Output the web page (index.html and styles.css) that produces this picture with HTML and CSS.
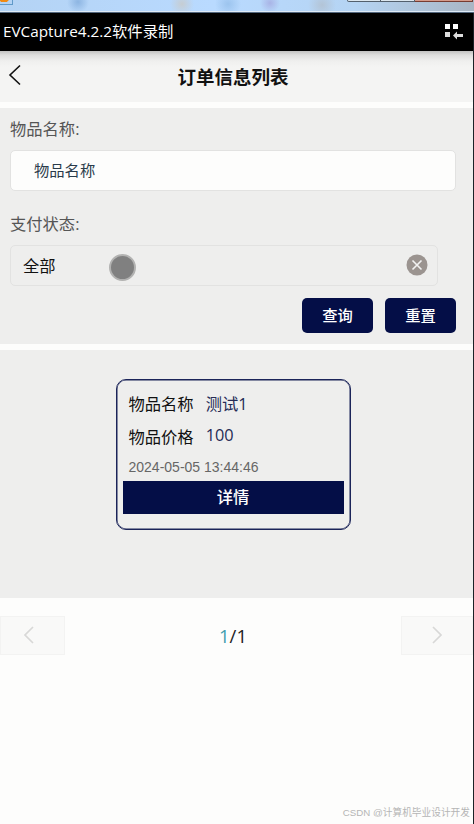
FILE: index.html
```html
<!DOCTYPE html>
<html lang="zh-CN">
<head>
    <meta charset="UTF-8">
    <meta name="viewport" content="width=device-width, initial-scale=1.0">
    <title>订单信息列表</title>
    <link rel="stylesheet" href="styles.css">
</head>
<body>
<div class="desktop">
    <span class="app-icon"></span>
    <div class="window-buttons"><i></i><i></i><i class="close"></i></div>
</div>
<div class="window">
    <div class="titlebar">
        <span>EVCapture4.2.2软件录制</span>
        <svg width="19" height="16" viewBox="0 0 19 16">
            <path fill="#fff" d="M1 0h5v5H1zM9 0h5v5H9z"/>
            <path fill="#ddd" d="M1 8h5v5H1zM9 11.500l4-4v2.500h6v3h-6v2.500z"/>
        </svg>
    </div>
    <div class="navbar">
        <svg class="back" width="14" height="22" viewBox="0 0 14 22">
            <path d="M12 1.500L2 11l10 9.500"/>
        </svg>
        <h1>订单信息列表</h1>
    </div>

    <form class="search">
        <label>物品名称:</label>
        <div class="input">物品名称</div>
        <label>支付状态:</label>
        <div class="select">
            <span>全部</span>
            <svg width="22" height="22" viewBox="0 0 22 22">
                <circle cx="11" cy="11" r="10.500" fill="#9b9490"/>
                <path d="M6.500 6.500l9 9M15.500 6.500l-9 9" stroke="#f2f2f2" stroke-width="1.600"/>
            </svg>
            <i class="pointer"></i>
        </div>
        <div class="buttons">
            <button type="button">查询</button>
            <button type="button">重置</button>
        </div>
    </form>

    <div class="list">
        <div class="card">
            <div class="row"><span>物品名称</span><b>测试1</b></div>
            <div class="row price"><span>物品价格</span><b>100</b></div>
            <div class="time">2024-05-05 13:44:46</div>
            <div class="detail">详情</div>
        </div>
    </div>

    <div class="pager">
        <div class="page-btn prev">
            <svg width="12" height="18" viewBox="0 0 12 18"><path d="M10 1L2 9l8 8"/></svg>
        </div>
        <div class="page-num"><span>1</span>/1</div>
        <div class="page-btn next">
            <svg width="12" height="18" viewBox="0 0 12 18"><path d="M2 1l8 8-8 8"/></svg>
        </div>
    </div>
    <div class="watermark">CSDN @计算机毕业设计开发</div>
</div>
</body>
</html>
```

FILE: styles.css
```css
* {
    box-sizing: border-box;
}

body {
    margin: 0;
    height: 824px;
    overflow: hidden;
    font-family: "Open Sans", "Noto Sans CJK SC", sans-serif;
    font-size: 16.3px;
    background: #fdfdfc;
}

svg {
    display: block;
    flex: none;
}

.desktop {
    display: flex;
    justify-content: space-between;
    height: 13px;
    background: radial-gradient(ellipse at 18px 6px, #7fa9d9 0, transparent 18px),
        radial-gradient(circle at 78px 2px, #8db5e2 0, transparent 11px),
        radial-gradient(circle at 182px 4px, #c6cdd2 0, transparent 12px),
        radial-gradient(circle at 228px 4px, #9cc4ee 0, transparent 13px),
        radial-gradient(circle at 270px 3px, #a9b4e6 0, transparent 10px),
        radial-gradient(circle at 322px 5px, #b3c4d6 0, transparent 14px),
        radial-gradient(ellipse at 400px 8px, #a9cbc8 0, transparent 26px),
        linear-gradient(90deg, #b4d3f4, #b9daff 45%, #b5d4f3 75%, #a9b6c4);
    border-bottom: 1px solid #53677e;
    box-shadow: inset 0 -1px #dfeaf5;
}

.app-icon {
    width: 13px;
    height: 5px;
    background: radial-gradient(ellipse at 4px 0, #f18a13 0 4px, transparent 5px);
    border: 1px solid #609ac9;
    border-width: 0 1px 1px 0;
}

.window-buttons {
    display: flex;
    width: 127px;
    height: 2px;
}

.window-buttons i {
    width: 34px;
    background: #dce7ef;
    border: 1px solid #53606d;
    border-top: 0;
    border-radius: 0 0 0 3px;
}

.window-buttons i + i {
    border-left: 0;
    border-radius: 0;
}

.window-buttons .close {
    width: 58px;
    background: #d49b8b;
    border-color: #773c31;
}

.window {
    position: relative;
    height: 811px;
    border-right: 1px solid #1b2227;
}

.titlebar {
    display: flex;
    align-items: center;
    justify-content: space-between;
    height: 38px;
    padding: 0 10px 4px 3px;
    font-size: 15.3px;
    color: #fff;
    background: #000;
}

.titlebar svg {
    margin-top: 4px;
}

.navbar {
    display: flex;
    align-items: center;
    height: 51px;
    padding: 0 8px;
    background: linear-gradient(#c2c2c1, #dededd 4px, #efefee 10px, #f4f4f3 16px);
}

.back {
    margin-top: -3px;
    fill: none;
    stroke: #111;
    stroke-width: 1.6;
}

h1 {
    flex: 1;
    margin: -1px 21px 0 0;
    font-size: 18.5px;
    font-weight: 600;
    text-align: center;
    color: #111;
}

.search {
    height: 236px;
    margin-top: 6px;
    padding: 8px 17px 0 10px;
    background: #eeeeed;
}

.search label {
    display: block;
    height: 34px;
    line-height: 26px;
    color: #555;
}

.input {
    height: 41px;
    margin-bottom: 20px;
    padding-left: 23px;
    line-height: 39px;
    font-size: 15.3px;
    color: #2a3b4a;
    background: #fdfdfc;
    border: 1px solid #e2e2e1;
    border-radius: 5px;
}

.select {
    position: relative;
    display: flex;
    align-items: center;
    justify-content: space-between;
    width: 428px;
    height: 41px;
    padding: 0 9px 2px 12px;
    color: #111;
    border: 1px solid #e2e2e1;
    border-radius: 5px;
}

.pointer {
    position: absolute;
    left: 98px;
    top: 8px;
    width: 27px;
    height: 27px;
    background: #808080;
    border: 2px solid #b2b2b1;
    border-radius: 50%;
}

.buttons {
    display: flex;
    justify-content: flex-end;
    gap: 12px;
    margin-top: 12px;
}

.buttons button {
    width: 71px;
    height: 35px;
    padding: 0 0 3px;
    font-family: inherit;
    font-size: 15.3px;
    font-weight: 500;
    color: #fff;
    background: #040e47;
    border: 0;
    border-radius: 5px;
}

.list {
    height: 248px;
    margin-top: 6px;
    padding-top: 29px;
    background: #eeeeed;
}

.card {
    width: 235px;
    height: 151px;
    margin-left: 115.5px;
    padding: 8px 6px;
    border: 1px solid #1b2459;
    border-radius: 10px;
    box-shadow: inset 0 0 0 0.5px #1b2459;
}

.row {
    display: flex;
    gap: 12px;
    height: 33px;
    padding-left: 6px;
    line-height: 32px;
    color: #111;
}

.row b {
    font-weight: 400;
    color: #252b55;
}

.price b {
    line-height: 28px;
}

.time {
    height: 27px;
    padding-left: 6px;
    line-height: 26px;
    font-family: "Liberation Sans", sans-serif;
    font-size: 14px;
    color: #666;
}

.detail {
    height: 33px;
    line-height: 33px;
    font-weight: 500;
    text-align: center;
    color: #fff;
    background: #040e47;
}

.pager {
    display: flex;
    justify-content: space-between;
    align-items: center;
    margin-top: 18px;
}

.page-btn {
    display: flex;
    align-items: center;
    height: 39px;
    background: #f9f9f8;
    border: 1px solid #f3f3f2;
}

.page-btn svg {
    margin-top: -2px;
    fill: none;
    stroke: #d8d8d7;
    stroke-width: 1.7;
}

.prev {
    width: 65px;
    padding-left: 22px;
}

.next {
    width: 72px;
    padding-left: 29px;
}

.page-num {
    font-size: 18.5px;
    color: #222;
}

.page-num span {
    color: #409eaf;
}

.watermark {
    position: absolute;
    right: 3px;
    bottom: 3px;
    font-family: "Liberation Sans", "Noto Sans CJK SC", sans-serif;
    font-size: 9.7px;
    line-height: 16px;
    color: #b5b5b5;
}
```
